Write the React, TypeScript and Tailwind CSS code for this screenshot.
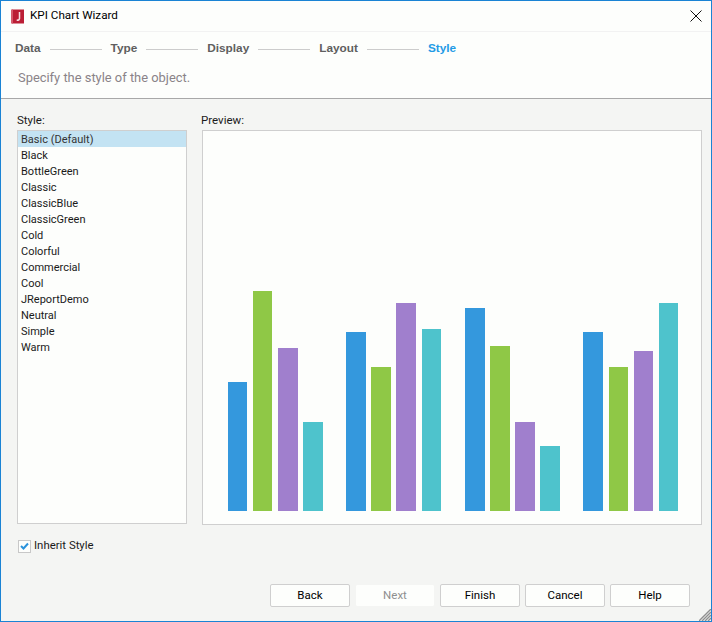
const font = "[font-family:'Roboto',sans-serif]";
const boldFont = "[font-family:'Liberation_Sans',sans-serif]";

const steps = ["Data", "Type", "Display", "Layout", "Style"];

const styles = ["Basic (Default)", "Black", "BottleGreen", "Classic", "ClassicBlue", "ClassicGreen", "Cold", "Colorful", "Commercial", "Cool", "JReportDemo", "Neutral", "Simple", "Warm"];

const colors = ["bg-[#3498dd]", "bg-[#8fc846]", "bg-[#a07fcd]", "bg-[#4ec3cc]"];
const groups = [
  [129, 220, 163, 89],
  [179, 144, 208, 182],
  [203, 165, 89, 65],
  [179, 144, 160, 208],
];

function WizardButton({ label, disabled }: { label: string; disabled?: boolean }) {
  return (
    <button className={`w-20 h-[23px] rounded-[2px] border text-[11.5px] ${disabled ? "border-[#f4f5f3] bg-[#fdfefc] text-[#8f8f8f]" : "border-[#cfcfcf] bg-[#fdfefc] text-black"}`}>
      {label}
    </button>
  );
}

export default function App() {
  return (
    <div className={`w-[712px] h-[622px] flex flex-col overflow-hidden relative border border-[#1a83d4] bg-[#f4f5f3] ${font}`}>
      {/* Title bar */}
      <div className="h-[31px] shrink-0 bg-[#fdfefc] border-b border-[#f2f2f2] flex items-center pl-[10px] pr-[9px]">
        <svg width="13" height="15" viewBox="0 0 13 15" className="shrink-0">
          <rect x="1" y="0.5" width="12" height="14" fill="#bb1e35" />
          <rect x="0" y="0.5" width="2" height="14" fill="#d4596b" />
          <path d="M8.5 3v6.5c0 1.2-.7 1.8-2.8 1.8" fill="none" stroke="#f6dfe2" strokeWidth="1.5" />
        </svg>
        <span className="ml-[6px] text-[11.7px] text-black">KPI Chart Wizard</span>
        <svg width="12" height="12" viewBox="0 0 12 12" className="ml-auto">
          <path d="M.5.5l11 11M11.5.5l-11 11" stroke="#111" strokeWidth="1" fill="none" />
        </svg>
      </div>

      {/* Steps header */}
      <div className="h-[67px] shrink-0 bg-[#fdfefc] border-b border-[#a8a8a8] pl-[14px] pt-[9px]">
        <div className={`flex items-center h-4 ${boldFont}`}>
          {steps.map((s, i) => (
            <div key={s} className="flex items-center">
              <span className={`text-[11.8px] font-bold ${s === "Style" ? "text-[#1f9be6]" : "text-[#5f5f5f]"}`}>{s}</span>
              {i < steps.length - 1 && <div className="w-[52px] h-px bg-[#cccccc] mx-[9px]" />}
            </div>
          ))}
        </div>
        <p className="mt-[13px] ml-[3px] text-[12.9px] leading-4 text-[#8a8388]">Specify the style of the object.</p>
      </div>

      {/* Body */}
      <div className="flex-1 flex flex-col pl-4 pr-[9px]">
        <div className="flex gap-[15px] pt-[13px]">
          <div className="w-[170px] shrink-0">
            <div className="text-[11.5px] text-[#1a1a1a] h-[18px] leading-4">Style:</div>
            <ul className="h-[394px] border border-[#cfcfcf] bg-[#fdfefc]">
              {styles.map((s, i) => (
                <li key={s} className={`h-4 leading-[18px] pl-[3px] text-[11px] ${i === 0 ? "bg-[#c3e3f3] text-[#333]" : "text-[#1a1a1a]"}`}>{s}</li>
              ))}
            </ul>
          </div>
          <div className="flex-1">
            <div className="text-[11.5px] text-[#1a1a1a] h-[18px] leading-4 -ml-px">Preview:</div>
            <div className="h-[395px] border border-[#cfcfcf] bg-[#fdfefc] flex items-end pl-[24.7px] pb-[13px] gap-[23.67px]">
              {groups.map((g, gi) => (
                <div key={gi} className="flex items-end gap-[5.4px]">
                  {g.map((h, i) => (
                    <div key={i} className={`w-[19.7px] ${colors[i]}`} style={{ height: h }} />
                  ))}
                </div>
              ))}
            </div>
          </div>
        </div>

        <label className="flex items-center mt-[14px] ml-[1px] h-[14px]">
          <span className="w-[13px] h-[13px] border border-[#c8c8c8] bg-[#fdfefc] flex items-center justify-center">
            <svg width="9" height="8" viewBox="0 0 9 8">
              <path d="M1 4l2.5 2.5L8 1.5" fill="none" stroke="#2a93dc" strokeWidth="2" />
            </svg>
          </span>
          <span className="ml-[3px] text-[11.4px] text-[#1a1a1a]">Inherit Style</span>
        </label>

        <div className="mt-[31px] flex justify-end gap-[5px] pr-[12px]">
          <WizardButton label="Back" />
          <WizardButton label="Next" disabled />
          <WizardButton label="Finish" />
          <WizardButton label="Cancel" />
          <WizardButton label="Help" />
        </div>
      </div>

      {/* Resize grip */}
      <svg width="12" height="12" viewBox="0 0 12 12" className="absolute right-0 bottom-0">
        <path d="M12 0L0 12M12 3L3 12M12 6L6 12M12 9L9 12" stroke="#8f8f8f" strokeWidth="1.4" fill="none" />
      </svg>
    </div>
  );
}
